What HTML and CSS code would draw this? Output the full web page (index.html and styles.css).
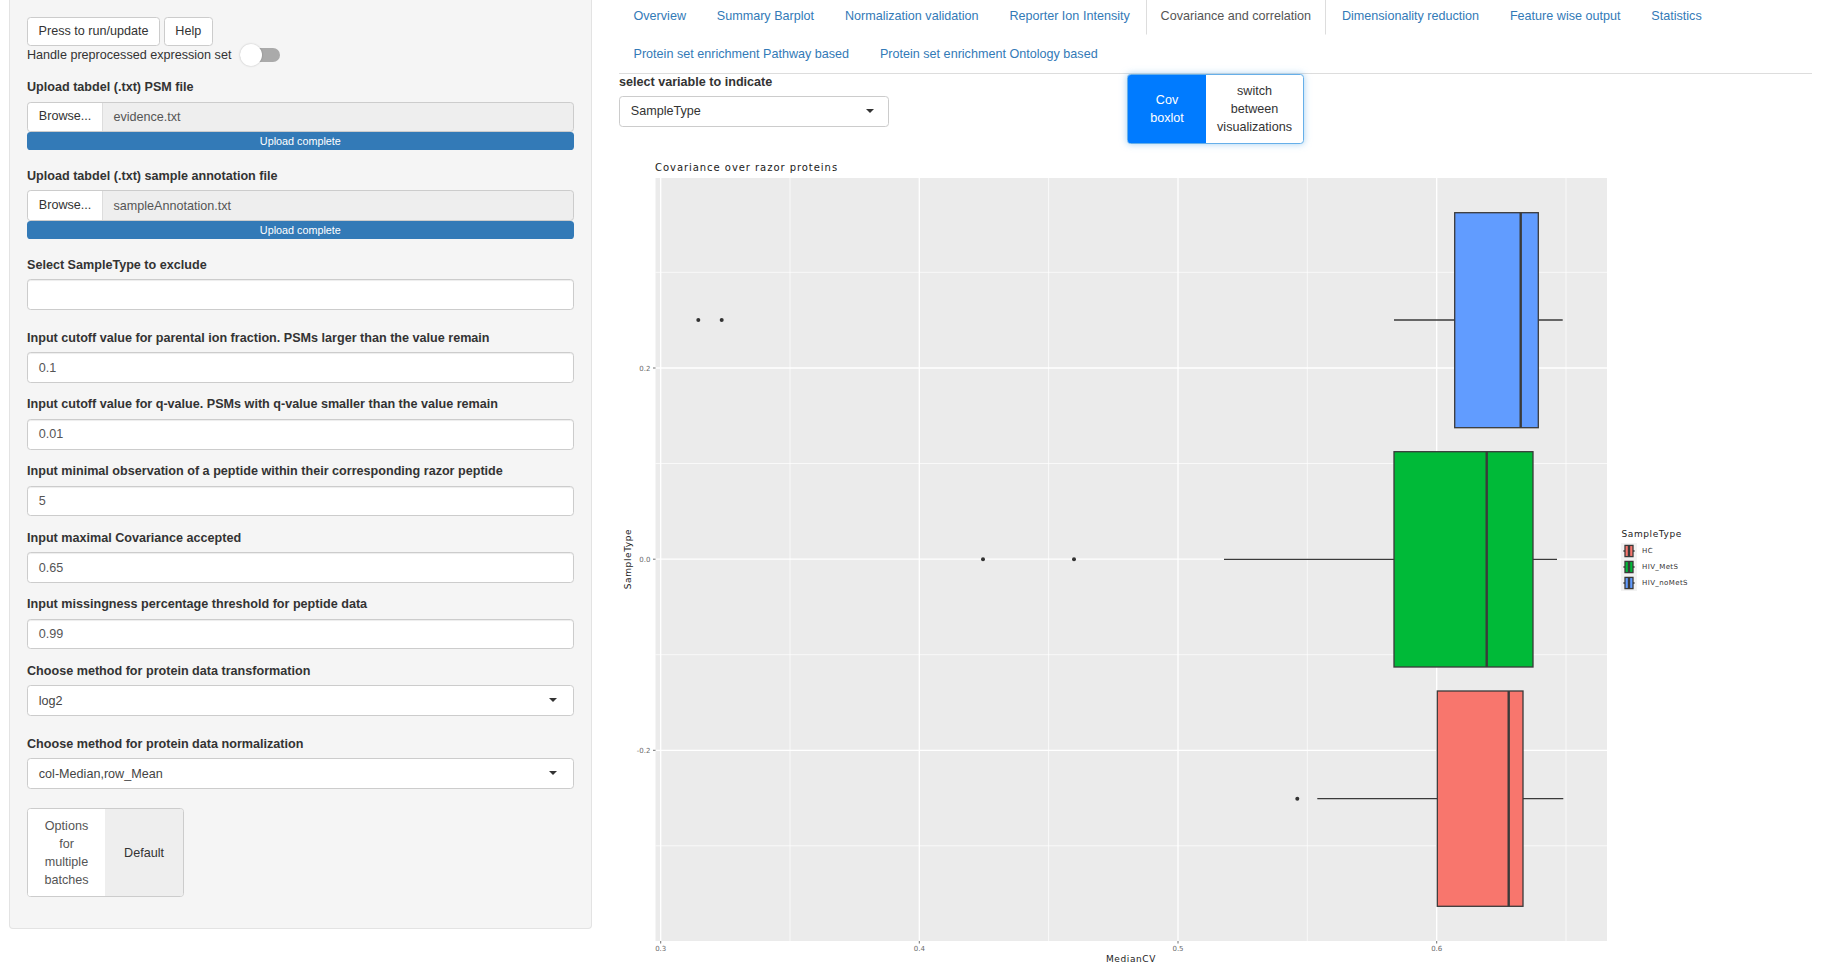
FILE: index.html
```html
<!DOCTYPE html>
<html lang="en">
<head>
<meta charset="utf-8">
<title>Covariance and correlation</title>
<link rel="stylesheet" href="styles.css">
</head>
<body>
<aside class="sidebar">
  <div class="btn-row">
    <button class="btn">Press to run/update</button>
    <button class="btn">Help</button>
  </div>
  <div class="toggle-row">
    <span>Handle preprocessed expression set</span>
    <span class="toggle"><span class="knob"></span></span>
  </div>
  <div class="group file-group first-file">
    <label>Upload tabdel (.txt) PSM file</label>
    <div class="file-input"><span class="browse">Browse...</span><span class="file-name">evidence.txt</span></div>
    <div class="progress">Upload complete</div>
  </div>
  <div class="group file-group second-file">
    <label>Upload tabdel (.txt) sample annotation file</label>
    <div class="file-input"><span class="browse">Browse...</span><span class="file-name">sampleAnnotation.txt</span></div>
    <div class="progress">Upload complete</div>
  </div>
  <div class="group exclude-group">
    <label>Select SampleType to exclude</label>
    <div class="field"></div>
  </div>
  <div class="group">
    <label>Input cutoff value for parental ion fraction. PSMs larger than the value remain</label>
    <div class="field">0.1</div>
  </div>
  <div class="group">
    <label>Input cutoff value for q-value. PSMs with q-value smaller than the value remain</label>
    <div class="field">0.01</div>
  </div>
  <div class="group">
    <label>Input minimal observation of a peptide within their corresponding razor peptide</label>
    <div class="field">5</div>
  </div>
  <div class="group">
    <label>Input maximal Covariance accepted</label>
    <div class="field">0.65</div>
  </div>
  <div class="group">
    <label>Input missingness percentage threshold for peptide data</label>
    <div class="field">0.99</div>
  </div>
  <div class="group select-group">
    <label>Choose method for protein data transformation</label>
    <div class="field select">log2<span class="caret"></span></div>
  </div>
  <div class="group select-group">
    <label>Choose method for protein data normalization</label>
    <div class="field select">col-Median,row_Mean<span class="caret"></span></div>
  </div>
  <div class="batch-toggle">
    <span class="batch-on">Options<br>for<br>multiple<br>batches</span>
    <span class="batch-off">Default</span>
  </div>
</aside>

<main class="main">
  <nav class="tabs">
    <a class="tab">Overview</a>
    <a class="tab">Summary Barplot</a>
    <a class="tab">Normalization validation</a>
    <a class="tab">Reporter Ion Intensity</a>
    <a class="tab active">Covariance and correlation</a>
    <a class="tab">Dimensionality reduction</a>
    <a class="tab">Feature wise output</a>
    <a class="tab">Statistics</a>
    <a class="tab">Protein set enrichment Pathway based</a>
    <a class="tab">Protein set enrichment Ontology based</a>
  </nav>
  <div class="controls">
    <div class="variable">
      <label>select variable to indicate</label>
      <div class="field select">SampleType<span class="caret"></span></div>
    </div>
    <div class="viz-toggle">
      <span class="viz-on">Cov<br>boxlot</span>
      <span class="viz-off">switch<br>between<br>visualizations</span>
    </div>
  </div>
  <svg class="plot" viewBox="619 150 1193 818" width="1193" height="818" xmlns="http://www.w3.org/2000/svg">
    <text class="p-title" x="655" y="171" textLength="183">Covariance over razor proteins</text>
    <rect class="p-panel" x="655.5" y="178" width="951.5" height="763"/>

    <g class="p-minor">
      <path d="M790 178V941M1048.6 178V941M1307.3 178V941M1566 178V941"/>
      <path d="M655.5 272.3H1607M655.5 463.5H1607M655.5 654.7H1607M655.5 845.8H1607"/>
    </g>
    <g class="p-major">
      <path d="M660.7 178V941M919.3 178V941M1178 178V941M1436.7 178V941"/>
      <path d="M655.5 368H1607M655.5 559.2H1607M655.5 750.3H1607"/>
    </g>

    <g class="p-box">
      <path d="M1394 320H1562.7"/>
      <rect class="blue" x="1454.7" y="212.7" width="83.6" height="215"/>
      <path class="median" d="M1520.7 212.7V427.7"/>
      <circle cx="698.3" cy="320" r="2"/>
      <circle cx="721.7" cy="320" r="2"/>

      <path d="M1224 559.3H1557"/>
      <rect class="green" x="1394" y="451.7" width="139" height="215.3"/>
      <path class="median" d="M1486.7 451.7V667"/>
      <circle cx="983" cy="559.3" r="2"/>
      <circle cx="1074" cy="559.3" r="2"/>

      <path d="M1317.3 798.7H1563.3"/>
      <rect class="red" x="1437.3" y="691" width="85.7" height="215.3"/>
      <path class="median" d="M1508.7 691V906.3"/>
      <circle cx="1297.3" cy="798.7" r="2"/>
    </g>

    <g class="p-ticks">
      <path d="M660.7 941v2.5M919.3 941v2.5M1178 941v2.5M1436.7 941v2.5"/>
      <path d="M655.5 368h-2.5M655.5 559.2h-2.5M655.5 750.3h-2.5"/>
    </g>
    <g class="p-tick-x">
      <text x="660.7" y="950.5">0.3</text>
      <text x="919.3" y="950.5">0.4</text>
      <text x="1178" y="950.5">0.5</text>
      <text x="1436.7" y="950.5">0.6</text>
    </g>
    <g class="p-tick-y">
      <text x="650.5" y="370.5">0.2</text>
      <text x="650.5" y="561.7">0.0</text>
      <text x="650.5" y="752.8">-0.2</text>
    </g>
    <text class="p-axis" x="1131" y="961.5">MedianCV</text>
    <text class="p-axis" transform="translate(631 559) rotate(-90)">SampleType</text>

    <text class="p-legend-title" x="1621.5" y="537">SampleType</text>
    <g class="p-box">
      <rect class="p-key" x="1621" y="543" width="16" height="16"/>
      <rect class="p-key" x="1621" y="559" width="16" height="16"/>
      <rect class="p-key" x="1621" y="575" width="16" height="16"/>
      <path d="M1623.4 551H1634.6M1623.4 567H1634.6M1623.4 583H1634.6"/>
      <rect class="red" x="1625" y="545.4" width="8" height="11.2"/>
      <path class="median" d="M1629 545.4V556.6"/>
      <rect class="green" x="1625" y="561.4" width="8" height="11.2"/>
      <path class="median" d="M1629 561.4V572.6"/>
      <rect class="blue" x="1625" y="577.4" width="8" height="11.2"/>
      <path class="median" d="M1629 577.4V588.6"/>
    </g>
    <g class="p-legend">
      <text x="1642" y="552.8">HC</text>
      <text x="1642" y="568.8">HIV_MetS</text>
      <text x="1642" y="584.8">HIV_noMetS</text>
    </g>
  </svg>
</main>
</body>
</html>
```

FILE: styles.css
```css
* { box-sizing: border-box; }

html, body {
  margin: 0;
  height: 968px;
  overflow: hidden;
  background: #fff;
}

body {
  display: flex;
  align-items: flex-start;
  font-family: "Liberation Sans", Arial, sans-serif;
  font-size: 12.6px;
  line-height: 18px;
  color: #333;
}

/* Sidebar */
.sidebar {
  width: 583px;
  height: 929px;
  margin-left: 9px;
  padding: 17px 17.3px 0 17px;
  flex: none;
  background: #f5f5f5;
  border: 1px solid #e3e3e3;
  border-top: 0;
  border-radius: 0 0 4px 4px;
}

.btn-row {
  display: flex;
  gap: 3.6px;
}

.btn {
  height: 29px;
  padding: 0 10.6px 1px;
  font: inherit;
  color: #333;
  background: #fff;
  border: 1px solid #ccc;
  border-radius: 3.6px;
}

.toggle-row {
  display: flex;
  align-items: center;
  gap: 9px;
  height: 18px;
}

.toggle {
  position: relative;
  display: block;
  width: 40px;
  height: 14px;
  background: #aaa;
  border-radius: 7px;
}

.knob {
  position: absolute;
  left: 0;
  top: -4px;
  width: 22px;
  height: 22px;
  background: #fff;
  border-radius: 50%;
  box-shadow: 0 0 2px rgba(0, 0, 0, .25);
}

.group {
  margin-bottom: 12.4px;
}

.group label,
.variable label {
  display: block;
  margin-bottom: 5.6px;
  font-weight: 700;
}

.first-file {
  margin-top: 13.5px;
}

.first-file label {
  margin-bottom: 6px;
}

.file-group {
  margin-bottom: 17px;
}

.second-file label {
  margin-bottom: 5.4px;
}

.exclude-group {
  margin-bottom: 18.4px;
}

.exclude-group label {
  margin-bottom: 5.4px;
}

.exclude-group .field {
  height: 31px;
}

.field {
  height: 30.6px;
  padding: 5.4px 10.8px;
  color: #555;
  background: #fff;
  border: 1px solid #ccc;
  border-radius: 3.6px;
  box-shadow: inset 0 1px 1px rgba(0, 0, 0, .075);
}

.select {
  position: relative;
  color: #333;
  box-shadow: none;
}

.group .select {
  color: #444;
}

.caret {
  position: absolute;
  right: 16px;
  top: 12px;
  width: 0;
  height: 0;
  border-left: 4.5px solid transparent;
  border-right: 4.5px solid transparent;
  border-top: 4.5px solid #333;
}

.variable .caret {
  right: 14.5px;
}

.select-group {
  margin-bottom: 18.9px;
}

.select-group label {
  margin-bottom: 5.6px;
}

.file-input {
  display: flex;
  height: 30.6px;
  background: #eee;
  border: 1px solid #ccc;
  border-radius: 3.6px;
}

.browse {
  width: 74.6px;
  padding: 4.5px 10.8px;
  background: #fff;
  border-right: 1px solid #ddd;
  border-radius: 3.6px 0 0 3.6px;
}

.file-name {
  padding: 5.4px 10.8px;
  color: #555;
}

.progress {
  height: 18px;
  font-size: 10.8px;
  line-height: 18px;
  text-align: center;
  color: #fff;
  background: #337ab7;
  border-radius: 3.6px;
}

.batch-toggle {
  display: flex;
  width: 157px;
  height: 89px;
  text-align: center;
  border: 1px solid #ccc;
  border-radius: 3.6px;
  overflow: hidden;
}

.batch-on {
  display: flex;
  align-items: center;
  justify-content: center;
  width: 77px;
  padding-top: 2px;
  color: #555;
  background: #fff;
}

.batch-off {
  display: flex;
  align-items: center;
  justify-content: center;
  flex: 1;
  padding-top: 2px;
  background: #eee;
}

/* Main */
.main {
  width: 1193px;
  margin-left: 27px;
  flex: none;
}

.tabs {
  display: flex;
  flex-wrap: wrap;
  margin-top: -3px;
  height: 76.6px;
  border-bottom: 1px solid #ddd;
}

.tab {
  height: 37.8px;
  padding: 9px 13.5px;
  margin-right: 1.8px;
  color: #337ab7;
  border: 1px solid transparent;
}

.tab.active {
  color: #555;
  border-color: #ddd;
  border-bottom-color: transparent;
}

.controls {
  display: flex;
  height: 76.4px;
}

.variable {
  width: 270px;
  margin-top: -1px;
}

.variable label {
  margin-bottom: 5.4px;
}

.viz-toggle {
  display: flex;
  width: 177px;
  height: 70px;
  margin-left: 238px;
  text-align: center;
  background: #fff;
  border: 1px solid #66afe9;
  border-radius: 3.6px;
  box-shadow: 0 0 7px rgba(102, 175, 233, .6);
  overflow: hidden;
}

.viz-on {
  display: flex;
  align-items: center;
  justify-content: center;
  width: 78px;
  color: #fff;
  background: #007bff;
}

.viz-off {
  display: flex;
  align-items: center;
  justify-content: center;
  flex: 1;
  color: #333;
}

/* Plot */
.plot {
  display: block;
  font-family: "DejaVu Sans", sans-serif;
}

.p-title {
  font-size: 10px;
  letter-spacing: .9px;
  fill: #1a1a1a;
}

.p-panel { fill: #ebebeb; }

.p-minor path { fill: none; stroke: #fff; stroke-width: .7; }
.p-major path { fill: none; stroke: #fff; stroke-width: 1.3; }

.p-box path { fill: none; stroke: #3a3a3a; stroke-width: 1.3; }
.p-box rect { stroke: #3a3a3a; stroke-width: 1.3; }
.p-box circle { fill: #333; }
.p-box .median { stroke-width: 2.4; }
.p-box .red { fill: #f8766d; }
.p-box .green { fill: #00ba38; }
.p-box .blue { fill: #619cff; }
.p-box .p-key { fill: #f2f2f2; stroke: none; }

.p-ticks path { fill: none; stroke: #333; stroke-width: .7; }

.p-tick-x text,
.p-tick-y text {
  font-size: 7px;
  fill: #6a6a6a;
}

.p-tick-x text { text-anchor: middle; }
.p-tick-y text { text-anchor: end; }

.p-axis {
  font-size: 9px;
  letter-spacing: .6px;
  text-anchor: middle;
  fill: #222;
}

.p-legend-title {
  font-size: 9px;
  letter-spacing: .6px;
  fill: #222;
}

.p-legend text {
  font-size: 7px;
  letter-spacing: .4px;
  fill: #333;
}
```
